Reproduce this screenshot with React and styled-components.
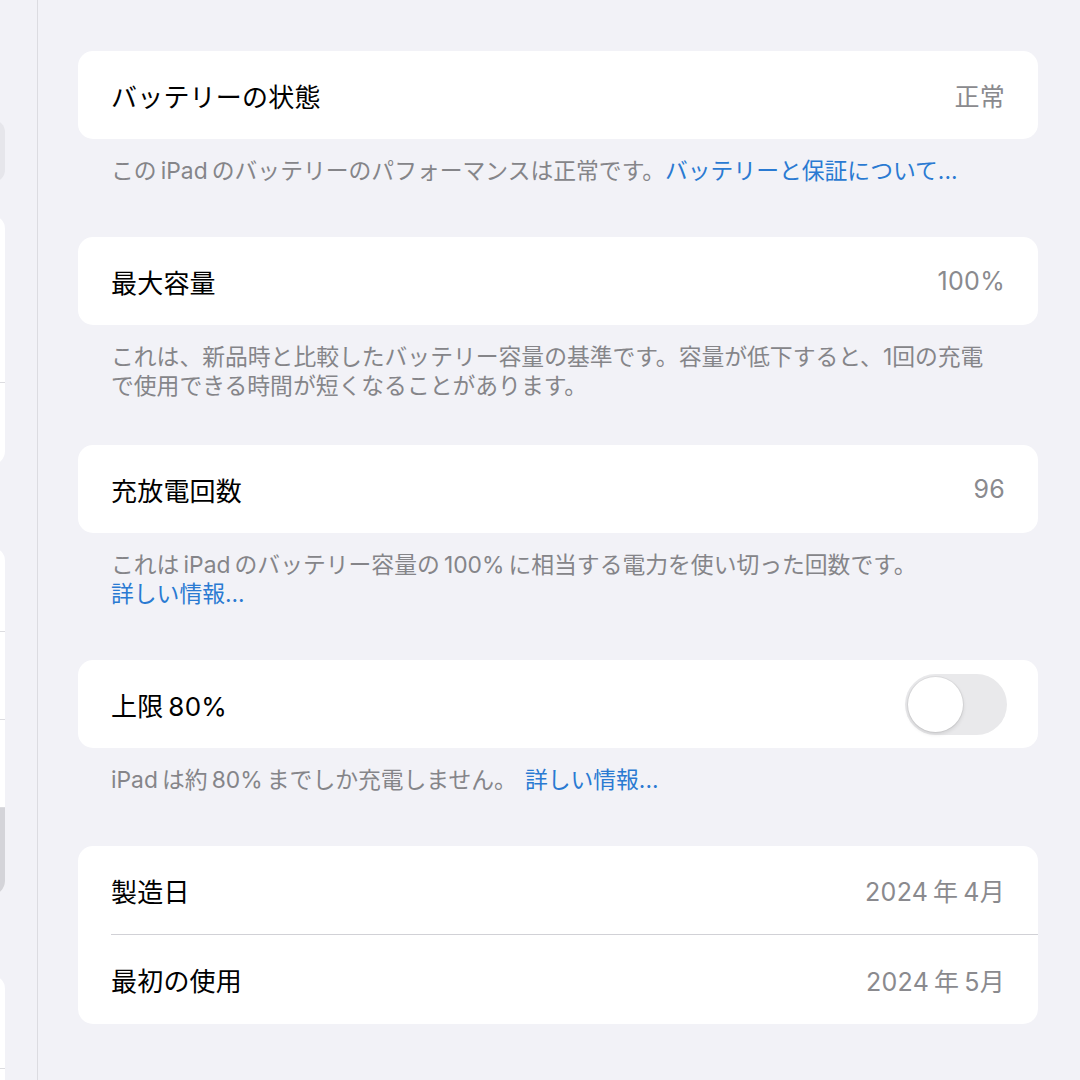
import React, { useState } from 'react'
import styled, { createGlobalStyle } from 'styled-components'

const GlobalStyle = createGlobalStyle`
  html, body {
    margin: 0;
    padding: 0;
    background: #f2f2f7;
  }
  body {
    font-family: Inter, "Noto Sans CJK JP", "Noto Sans", sans-serif;
    -webkit-font-smoothing: antialiased;
  }
`

const Screen = styled.div`
  display: flex;
  width: 1080px;
  height: 1080px;
  overflow: hidden;
  background: #f2f2f7;
`

const Sidebar = styled.aside`
  width: 37px;
  flex-shrink: 0;
  border-right: 1px solid #dcdce1;
  overflow: hidden;
  display: flex;
  flex-direction: column;
  padding-top: 120px;
`

const SideBlock = styled.div`
  width: 300px;
  margin-left: -295px;
  margin-top: ${p => p.$gap || 0}px;
  border-radius: 14px;
  overflow: hidden;
  background: #fff;
  flex-shrink: 0;
`

const SideRow = styled.div`
  height: ${p => p.$h}px;
  background: ${p => (p.$selected ? '#d4d4d9' : 'transparent')};
  border-top: ${p => (p.$first ? 'none' : '1px solid #dcdce0')};
  box-sizing: border-box;
`

const SideSearch = styled.div`
  width: 300px;
  height: 62px;
  margin-left: -295px;
  border-radius: 12px;
  background: #e6e6eb;
  flex-shrink: 0;
`

const Main = styled.main`
  flex: 1;
  padding: 51px 0 0 40px;
`

const Section = styled.section`
  width: 960px;
  margin-bottom: ${p => p.$mb}px;
`

const Card = styled.div`
  background: #fff;
  border-radius: 15px;
  overflow: hidden;
`

const Row = styled.div`
  display: flex;
  align-items: center;
  justify-content: space-between;
  height: ${p => p.$h || 88}px;
  padding: 0 ${p => (p.$toggle ? 31 : 33)}px 0 33px;
  box-sizing: border-box;
`

const Divider = styled.div`
  height: 1px;
  margin-left: 33px;
  background: #d1d1d6;
`

const Label = styled.span`
  font-size: 26px;
  color: #000;
  letter-spacing: 0.2px;
`

const Value = styled.span`
  font-size: 25px;
  color: #8a8a8e;
  letter-spacing: 0.3px;
`

const Footer = styled.p`
  margin: 0;
  padding: 17px 20px 0 33px;
  font-size: 22.8px;
  line-height: 29px;
  color: #858589;
`

const Link = styled.a`
  color: #2a7ad2;
  text-decoration: none;
  cursor: pointer;
  margin-left: ${p => p.$ml || 0}px;
`

const Track = styled.button`
  width: 102px;
  height: 61px;
  border: none;
  border-radius: 31px;
  padding: 3px;
  display: flex;
  align-items: center;
  justify-content: ${p => (p.$on ? 'flex-end' : 'flex-start')};
  background: ${p => (p.$on ? '#34c759' : '#e9e9eb')};
  cursor: pointer;
  transition: background 0.2s;
`

const Knob = styled.span`
  width: 55px;
  height: 55px;
  border-radius: 50%;
  background: #fff;
  box-shadow: 0 0 0 1px rgba(0, 0, 0, 0.05), 0 2px 4px rgba(0, 0, 0, 0.12);
`

function Toggle() {
  const [on, setOn] = useState(false)
  return (
    <Track $on={on} onClick={() => setOn(!on)} aria-pressed={on}>
      <Knob />
    </Track>
  )
}

// thin space, as iOS puts between Latin and Japanese runs
const t = '\u2009'

export default function App() {
  return (
    <>
      <GlobalStyle />
      <Screen>
        <Sidebar>
          <SideSearch />
          <SideBlock $gap={33}>
            <SideRow $h={167} $first />
            <SideRow $h={83} />
          </SideBlock>
          <SideBlock $gap={82}>
            <SideRow $h={84} $first />
            <SideRow $h={88} />
            <SideRow $h={88} />
            <SideRow $h={88} $selected />
          </SideBlock>
          <SideBlock $gap={80}>
            <SideRow $h={93} $first />
            <SideRow $h={88} />
          </SideBlock>
        </Sidebar>

        <Main>
          <Section $mb={52}>
            <Card>
              <Row>
                <Label>バッテリーの状態</Label>
                <Value>正常</Value>
              </Row>
            </Card>
            <Footer>
              この{t}iPad{t}のバッテリーのパフォーマンスは正常です。<Link>バッテリーと保証について...</Link>
            </Footer>
          </Section>

          <Section $mb={45}>
            <Card>
              <Row>
                <Label>最大容量</Label>
                <Value>100%</Value>
              </Row>
            </Card>
            <Footer>
              これは、新品時と比較したバッテリー容量の基準です。容量が低下すると、1回の充電
              <br />
              で使用できる時間が短くなることがあります。
            </Footer>
          </Section>

          <Section $mb={52}>
            <Card>
              <Row>
                <Label>充放電回数</Label>
                <Value>96</Value>
              </Row>
            </Card>
            <Footer>
              これは{t}iPad{t}のバッテリー容量の{t}100%{t}に相当する電力を使い切った回数です。
              <br />
              <Link>詳しい情報...</Link>
            </Footer>
          </Section>

          <Section $mb={52}>
            <Card>
              <Row $toggle>
                <Label>上限{t}80%</Label>
                <Toggle />
              </Row>
            </Card>
            <Footer>
              iPad{t}は約{t}80%{t}までしか充電しません。<Link $ml={8}>詳しい情報...</Link>
            </Footer>
          </Section>

          <Section $mb={0}>
            <Card>
              <Row $h={88}>
                <Label>製造日</Label>
                <Value>2024{t}年{t}4月</Value>
              </Row>
              <Divider />
              <Row $h={89}>
                <Label>最初の使用</Label>
                <Value>2024{t}年{t}5月</Value>
              </Row>
            </Card>
          </Section>
        </Main>
      </Screen>
    </>
  )
}
